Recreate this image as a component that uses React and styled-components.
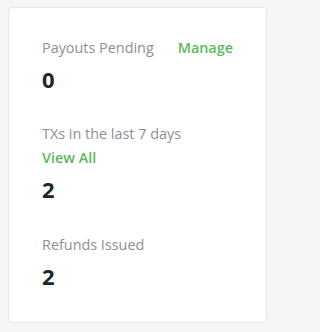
import React from 'react'
import styled, { createGlobalStyle } from 'styled-components'

const GlobalStyle = createGlobalStyle`
  body {
    margin: 0;
    padding: 7px 9px 8px 8px;
    background: #f5f6f8;
    font-family: "Open Sans", "Liberation Sans", sans-serif;
  }
`

const Card = styled.div`
  box-sizing: border-box;
  width: 259px;
  background: #fff;
  border: 1px solid #e4e6ea;
  border-radius: 4px;
  padding: 28px 33px 33px 33px;
  display: flex;
  flex-direction: column;
  gap: 30px;
`

const Stat = styled.div`
  display: flex;
  flex-direction: column;
`

const Head = styled.div`
  display: flex;
  flex-wrap: wrap;
  justify-content: space-between;
  font-size: 14.4px;
  line-height: 24px;
`

const Label = styled.span`
  color: #8b9096;
`

const Link = styled.a`
  color: #5cb85c;
  font-weight: 600;
  text-decoration: none;
  cursor: pointer;
`

const Value = styled.div`
  margin-top: 6px;
  font-size: 22px;
  line-height: 1.2;
  font-weight: 700;
  color: #212529;
`

const stats = [
  { label: 'Payouts Pending', link: 'Manage', value: 0 },
  { label: 'TXs in the last 7 days', link: 'View All', value: 2 },
  { label: 'Refunds Issued', value: 2 },
]

export default class App extends React.Component {
  render() {
    return (
      <>
        <GlobalStyle />
        <Card>
          {stats.map(s => (
            <Stat key={s.label}>
              <Head>
                <Label>{s.label}</Label>
                {s.link && <Link>{s.link}</Link>}
              </Head>
              <Value>{s.value}</Value>
            </Stat>
          ))}
        </Card>
      </>
    )
  }
}
